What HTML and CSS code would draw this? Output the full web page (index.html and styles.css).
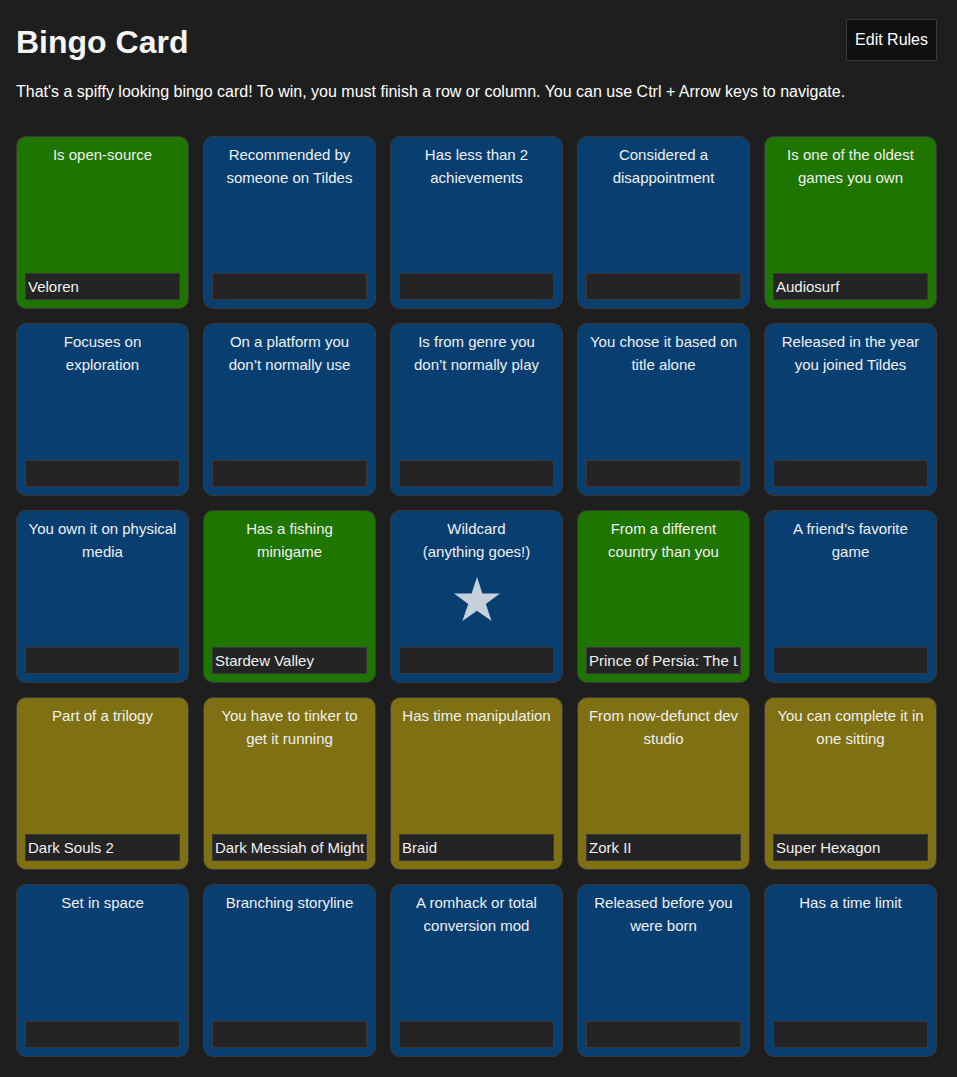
FILE: index.html
```
<!DOCTYPE html>
<html lang="en">
<head>
<meta charset="utf-8">
<meta name="viewport" content="width=device-width, initial-scale=1">
<title>Bingo Card</title>
<link rel="stylesheet" href="styles.css">
</head>
<body>
<header class="header">
  <h1 class="title">Bingo Card</h1>
  <button class="edit" type="button">Edit Rules</button>
</header>
<p class="intro">That's a spiffy looking bingo card! To win, you must finish a row or column. You can use Ctrl + Arrow keys to navigate.</p>
<main class="board">
  <div class="card done"><label class="rule" for="c1">Is open-source</label><input class="game" id="c1" type="text" value="Veloren"></div>
  <div class="card"><label class="rule" for="c2">Recommended by someone on Tildes</label><input class="game" id="c2" type="text"></div>
  <div class="card"><label class="rule" for="c3">Has less than 2 achievements</label><input class="game" id="c3" type="text"></div>
  <div class="card"><label class="rule" for="c4">Considered a disappointment</label><input class="game" id="c4" type="text"></div>
  <div class="card done"><label class="rule" for="c5">Is one of the oldest games you own</label><input class="game" id="c5" type="text" value="Audiosurf"></div>

  <div class="card"><label class="rule" for="c6">Focuses on exploration</label><input class="game" id="c6" type="text"></div>
  <div class="card"><label class="rule" for="c7">On a platform you don’t normally use</label><input class="game" id="c7" type="text"></div>
  <div class="card"><label class="rule" for="c8">Is from genre you don’t normally play</label><input class="game" id="c8" type="text"></div>
  <div class="card"><label class="rule" for="c9">You chose it based on title alone</label><input class="game" id="c9" type="text"></div>
  <div class="card"><label class="rule" for="c10">Released in the year you joined Tildes</label><input class="game" id="c10" type="text"></div>

  <div class="card"><label class="rule" for="c11">You own it on physical media</label><input class="game" id="c11" type="text"></div>
  <div class="card done"><label class="rule" for="c12">Has a fishing minigame</label><input class="game" id="c12" type="text" value="Stardew Valley"></div>
  <div class="card"><label class="rule" for="c13">Wildcard<br>(anything goes!)</label><svg class="star" viewBox="0 0 46 44" aria-hidden="true"><path d="M23 0L28.4 16.4H46L31.8 26.9L37.6 44L23 33.8L8.4 44L14.2 26.9L0 16.4H17.6Z"/></svg><input class="game" id="c13" type="text"></div>
  <div class="card done"><label class="rule" for="c14">From a different country than you</label><input class="game" id="c14" type="text" value="Prince of Persia: The Lost Crown"></div>
  <div class="card"><label class="rule" for="c15">A friend’s favorite game</label><input class="game" id="c15" type="text"></div>

  <div class="card playing"><label class="rule" for="c16">Part of a trilogy</label><input class="game" id="c16" type="text" value="Dark Souls 2"></div>
  <div class="card playing"><label class="rule" for="c17">You have to tinker to get it running</label><input class="game" id="c17" type="text" value="Dark Messiah of Might and Magic"></div>
  <div class="card playing"><label class="rule" for="c18">Has time manipulation</label><input class="game" id="c18" type="text" value="Braid"></div>
  <div class="card playing"><label class="rule" for="c19">From now-defunct dev studio</label><input class="game" id="c19" type="text" value="Zork II"></div>
  <div class="card playing"><label class="rule" for="c20">You can complete it in one sitting</label><input class="game" id="c20" type="text" value="Super Hexagon"></div>

  <div class="card"><label class="rule" for="c21">Set in space</label><input class="game" id="c21" type="text"></div>
  <div class="card"><label class="rule" for="c22">Branching storyline</label><input class="game" id="c22" type="text"></div>
  <div class="card"><label class="rule" for="c23">A romhack or total conversion mod</label><input class="game" id="c23" type="text"></div>
  <div class="card"><label class="rule" for="c24">Released before you were born</label><input class="game" id="c24" type="text"></div>
  <div class="card"><label class="rule" for="c25">Has a time limit</label><input class="game" id="c25" type="text"></div>
</main>
</body>
</html>
```
FILE: styles.css
```
* {
  box-sizing: border-box;
}

body {
  margin: 0;
  padding: 19px 20px 20px 16px;
  background: #1e1e1e;
  color: #fff;
  font: 16px/24px "Liberation Sans", Arial, sans-serif;
}

.header {
  display: flex;
  justify-content: space-between;
  align-items: flex-start;
}

.title {
  margin: 0;
  font-size: 32px;
  line-height: 46px;
  color: #f5f5f5;
}

.edit {
  padding: 8px;
  border: 1px solid #383838;
  background: #111;
  color: #fff;
  font: inherit;
}

.intro {
  margin: 15px 0 32px;
}

.board {
  display: grid;
  grid-template-columns: repeat(5, minmax(0, 1fr));
  gap: 14px;
}

.card {
  display: flex;
  flex-direction: column;
  align-items: center;
  aspect-ratio: 1;
  padding: 6px 8px 8px;
  border: 1px solid #383838;
  border-radius: 10px;
  background: #083f70;
  font-size: 15px;
  line-height: 23px;
  text-align: center;
}

.done {
  background: #1e7500;
}

.playing {
  background: #7f7013;
}

.rule {
  padding: 0 2px;
  color: #f0f0f0;
}

.star {
  width: 46px;
  margin-top: 14px;
  fill: #c5d0da;
}

.game {
  width: 100%;
  height: 27px;
  margin-top: auto;
  padding: 1px 2px;
  border: 1px solid #383838;
  background: #242424;
  color: #f0f0f0;
  font: inherit;
}
```
